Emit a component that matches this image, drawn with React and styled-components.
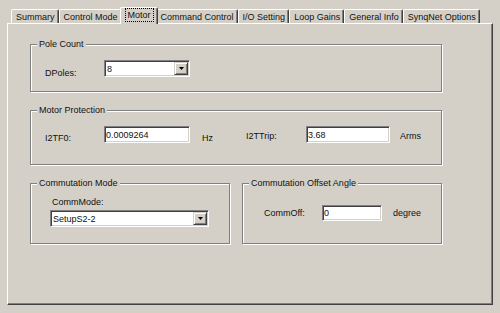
import React from "react";
import styled, { createGlobalStyle } from "styled-components";

const FACE = "#d4d0c8";

const GlobalStyle = createGlobalStyle`
  html, body {
    margin: 0;
    padding: 0;
    background: ${FACE};
  }
  body {
    font-family: "Liberation Sans", Arial, sans-serif;
    font-size: 9px;
    color: #111;
  }
`;

const TABS = [
  "Summary",
  "Control Mode",
  "Motor",
  "Command Control",
  "I/O Setting",
  "Loop Gains",
  "General Info",
  "SynqNet Options",
];
const ACTIVE_TAB = "Motor";

export default function App() {
  return (
    <Window>
      <GlobalStyle />
      <TabBar>
        {TABS.map((t) => (
          <Tab key={t} $active={t === ACTIVE_TAB}>
            {t === ACTIVE_TAB ? <Focus>{t}</Focus> : t}
          </Tab>
        ))}
      </TabBar>
      <Panel>
        <Group $w={412} $h={48}>
          <Legend>Pole Count</Legend>
          <Row $pt={13} $pl={14}>
            <Label $w={59} $dy={10}>DPoles:</Label>
            <Combo $w={86}>
              <span>8</span>
              <DropButton>
                <Arrow />
              </DropButton>
            </Combo>
          </Row>
        </Group>

        <Group $w={412} $h={55}>
          <Legend>Motor Protection</Legend>
          <Row $pt={14} $pl={14}>
            <Label $w={59} $dy={8}>I2TF0:</Label>
            <Field $w={86}>0.0009264</Field>
            <Label $w={44} $ml={12} $dy={8}>Hz</Label>
            <Label $w={60} $dy={4}>I2TTrip:</Label>
            <Field $w={84}>3.68</Field>
            <Label $ml={10} $dy={4}>Arms</Label>
          </Row>
        </Group>

        <BottomRow>
          <Group $w={200} $h={61}>
            <Legend>Commutation Mode</Legend>
            <Column $pt={13} $pl={19}>
              <Label $ml={2}>CommMode:</Label>
              <Combo $w={159}>
                <span>SetupS2-2</span>
                <DropButton>
                  <Arrow />
                </DropButton>
              </Combo>
            </Column>
          </Group>
          <Group $w={200} $h={61}>
            <Legend>Commutation Offset Angle</Legend>
            <Row $pt={21} $pl={21}>
              <Label $w={58}>CommOff:</Label>
              <Field $w={60} $h={16}>0</Field>
              <Label $ml={11}>degree</Label>
            </Row>
          </Group>
        </BottomRow>
      </Panel>
    </Window>
  );
}

function Arrow() {
  return (
    <svg width="5" height="3" viewBox="0 0 5 3">
      <polygon points="0,0 5,0 2.5,3" fill="#000" />
    </svg>
  );
}

const Window = styled.div`
  width: 500px;
  height: 313px;
  box-sizing: border-box;
  padding: 7px 0 0 7px;
`;

const TabBar = styled.div`
  display: flex;
  align-items: flex-end;
  height: 16px;
  padding-left: 4px;
  position: relative;
  z-index: 1;
`;

const Tab = styled.div`
  position: relative;
  z-index: ${(p) => (p.$active ? 2 : 1)};
  height: ${(p) => (p.$active ? 17 : 14)}px;
  margin: 0 ${(p) => (p.$active ? -2 : 0)}px ${(p) => (p.$active ? -1 : 0)}px;
  padding: ${(p) => (p.$active ? "0 5px 2px 6px" : "0 3px 0 4px")};
  box-sizing: border-box;
  display: flex;
  align-items: center;
  white-space: nowrap;
  background: ${FACE};
  border-top: 1px solid #fff;
  border-left: 1px solid #fff;
  border-right: 1px solid #404040;
  box-shadow: inset -1px 0 0 #808080;
  border-radius: 2px 2px 0 0;
`;

const Focus = styled.span`
  outline: 1px dotted #000;
  outline-offset: 1px;
  padding: 0 1px;
  line-height: 10px;
`;

const Panel = styled.div`
  width: 486px;
  height: 282px;
  box-sizing: border-box;
  border-top: 1px solid #fff;
  border-left: 1px solid #fff;
  border-right: 1px solid #404040;
  border-bottom: 1px solid #404040;
  box-shadow: inset -1px -1px 0 #808080;
  padding: 20px 0 0 22px;
  display: flex;
  flex-direction: column;
  gap: 18px;
`;

const Group = styled.div`
  position: relative;
  box-sizing: border-box;
  width: ${(p) => p.$w}px;
  height: ${(p) => p.$h}px;
  border: 1px solid #808080;
  box-shadow: inset 1px 1px 0 #fff, 1px 1px 0 #fff;
`;

const Legend = styled.span`
  position: absolute;
  top: -6px;
  left: 6px;
  padding: 0 2px;
  line-height: 11px;
  background: ${FACE};
  white-space: nowrap;
`;

const BottomRow = styled.div`
  display: flex;
  gap: 12px;
`;

const Row = styled.div`
  display: flex;
  align-items: center;
  padding: ${(p) => p.$pt}px 0 0 ${(p) => p.$pl}px;
`;

const Column = styled.div`
  display: flex;
  flex-direction: column;
  align-items: flex-start;
  gap: 2px;
  padding: ${(p) => p.$pt}px 0 0 ${(p) => p.$pl}px;
`;

const Label = styled.span`
  flex: none;
  width: ${(p) => (p.$w ? `${p.$w}px` : "auto")};
  margin-left: ${(p) => p.$ml || 0}px;
  margin-top: ${(p) => p.$dy || 0}px;
  line-height: 11px;
  white-space: nowrap;
`;

const Field = styled.div`
  flex: none;
  width: ${(p) => p.$w}px;
  height: ${(p) => p.$h || 17}px;
  box-sizing: border-box;
  display: flex;
  align-items: center;
  padding: 0 1px;
  background: #fff;
  border-top: 1px solid #808080;
  border-left: 1px solid #808080;
  border-right: 1px solid #fff;
  border-bottom: 1px solid #fff;
  box-shadow: inset 1px 1px 0 #404040, inset -1px -1px 0 ${FACE};
  white-space: nowrap;
`;

const Combo = styled(Field)`
  padding: 1px 1px 1px 2px;
  justify-content: space-between;
`;

const DropButton = styled.div`
  width: 14px;
  height: 100%;
  box-sizing: border-box;
  display: flex;
  align-items: center;
  justify-content: center;
  background: ${FACE};
  border-top: 1px solid ${FACE};
  border-left: 1px solid ${FACE};
  border-right: 1px solid #404040;
  border-bottom: 1px solid #404040;
  box-shadow: inset 1px 1px 0 #fff, inset -1px -1px 0 #808080;
`;
